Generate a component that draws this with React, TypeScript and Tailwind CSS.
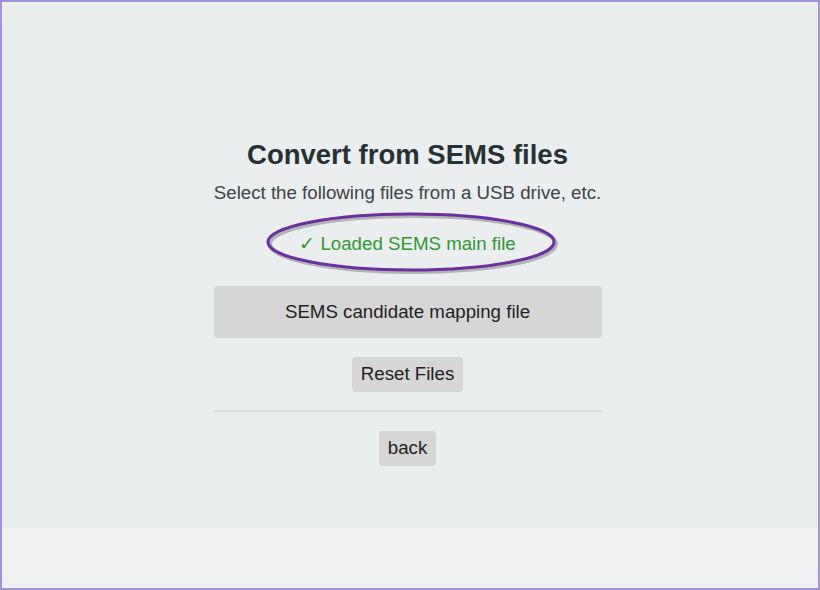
export default function App() {
  return (
    <div
      className="flex h-[590px] w-[820px] flex-col overflow-hidden border-2 border-[#a394d9] bg-[#eff0f1]"
      style={{ fontFamily: '"Liberation Sans", Arial, sans-serif' }}
    >
      <main className="flex h-[526px] flex-col items-center bg-[#eaeeef] pr-[5px] pt-[135px]">
        <div className="flex w-[388px] flex-col items-center">
          <h1 className="whitespace-nowrap text-[27.5px] font-bold leading-[36px] text-[#263134]">
            Convert from SEMS files
          </h1>
          <p className="mt-[8px] whitespace-nowrap text-[18.7px] leading-[24px] text-[#3e4446]">
            Select the following files from a USB drive, etc.
          </p>

          <div className="relative mt-[7px] flex h-[62px] w-full items-center justify-center">
            <svg
              className="absolute left-[50px] top-0 h-[64px] w-[294px] overflow-visible"
              viewBox="0 0 294 64"
              fill="none"
            >
              <ellipse cx="149" cy="32" rx="143" ry="28" stroke="#7a7a7a" strokeOpacity="0.5" strokeWidth="4" />
              <ellipse cx="147" cy="30" rx="143" ry="28" stroke="#6b2fa3" strokeWidth="3" />
            </svg>
            <span className="relative mt-[2px] whitespace-nowrap text-[18.7px] leading-[24px] text-[#2f9a2f]">
              ✓ Loaded SEMS main file
            </span>
          </div>

          <button className="mt-[12px] h-[52px] w-full rounded-[4px] bg-[#d6d6d6] text-[18.7px] text-[#222]">
            SEMS candidate mapping file
          </button>

          <button className="mt-[19px] h-[35px] rounded-[4px] bg-[#d6d6d6] px-[9px] text-[18.7px] text-[#222]">
            Reset Files
          </button>

          <hr className="mt-[18px] w-full border-t-2 border-[#dadedf]" />

          <button className="mt-[19px] h-[35px] rounded-[4px] bg-[#d6d6d6] px-[9px] text-[18.7px] text-[#222]">
            back
          </button>
        </div>
      </main>
    </div>
  );
}
